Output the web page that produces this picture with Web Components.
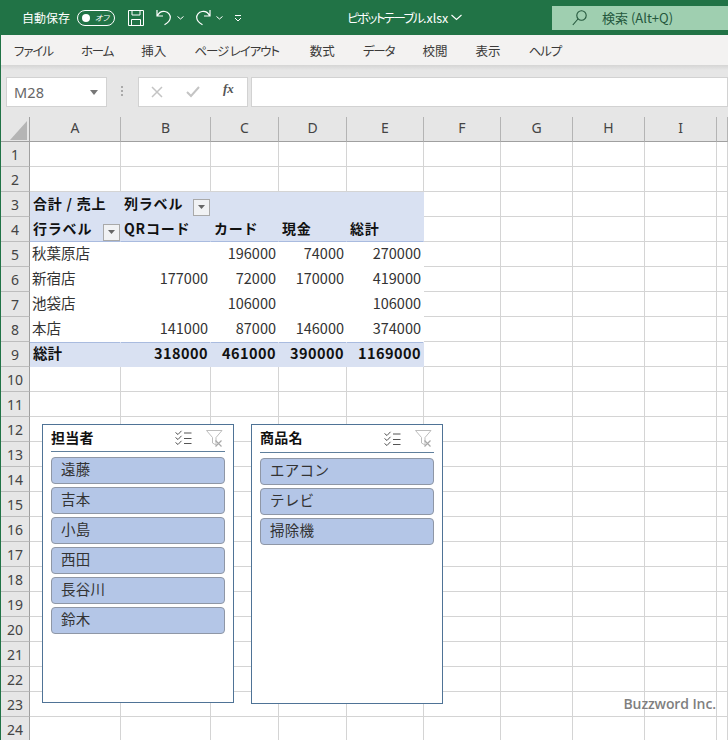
<!DOCTYPE html>
<html lang="ja">
<head>
<meta charset="utf-8">
<title>ピボットテーブル.xlsx</title>
<style>
html,body{margin:0;padding:0;background:#fff;}
body{width:728px;height:740px;overflow:hidden;font-family:"Noto Sans CJK JP","Noto Sans",sans-serif;}
</style>
</head>
<body>
<x-titlebar></x-titlebar>
<x-tabs></x-tabs>
<x-formula-bar></x-formula-bar>
<x-sheet>
  <x-slicer title-text="担当者" style="--l:41px;--t:307px;--h:279px">
    <x-slicer-item>遠藤</x-slicer-item>
    <x-slicer-item>吉本</x-slicer-item>
    <x-slicer-item>小島</x-slicer-item>
    <x-slicer-item>西田</x-slicer-item>
    <x-slicer-item>長谷川</x-slicer-item>
    <x-slicer-item>鈴木</x-slicer-item>
  </x-slicer>
  <x-slicer title-text="商品名" style="--l:250px;--t:307px;--h:280px;--shift:1px">
    <x-slicer-item>エアコン</x-slicer-item>
    <x-slicer-item>テレビ</x-slicer-item>
    <x-slicer-item>掃除機</x-slicer-item>
  </x-slicer>
</x-sheet>
<script>
const FONT='"Noto Sans CJK JP","Noto Sans",sans-serif';
function shadow(el,html){el.attachShadow({mode:'open'}).innerHTML=html;}

customElements.define('x-titlebar',class extends HTMLElement{
  connectedCallback(){ if(this.shadowRoot)return; shadow(this,`<style>
    :host{display:flex;align-items:center;height:35px;background:#217346;color:#fff;font:12px ${FONT};position:relative;box-sizing:border-box}
    .auto{margin-left:22px;width:55px;white-space:nowrap;letter-spacing:0}
    .toggle{width:38px;height:16px;box-sizing:border-box;border:1px solid #fff;border-radius:8px;display:flex;align-items:center;padding:0 4px;gap:5px;font-size:8px;line-height:1;font-style:italic;white-space:nowrap;overflow:hidden;font-feature-settings:"palt"}
    .toggle i{width:8px;height:8px;border-radius:50%;background:#fff;display:block;flex:none}
    svg{display:block;flex:none}
    .save{margin-left:13px}
    .undo{margin-left:12px}.c1{margin-left:5px}
    .redo{margin-left:11px}.c2{margin-left:5px}
    .qat{margin-left:11px}
    .name{margin-left:105px;width:104px;white-space:nowrap;font-size:12.5px;font-feature-settings:"palt"}
    .name b{font-weight:400;letter-spacing:-1.6px}
    .search{margin-left:auto;width:176px;height:24px;background:#9fcfb0;color:#24573c;display:flex;align-items:center;font-size:13px;box-sizing:border-box;padding-left:20px}
    .search span{margin-left:15px;white-space:nowrap}
  </style>
  <span class="auto">自動保存</span>
  <span class="toggle"><i></i><span>オフ</span></span>
  <svg class="save" width="16" height="16" viewBox="0 0 16 16" fill="none" stroke="#fff"><path d="M.5.5h15v15H.5zM4 .5v4.5h8V.5M3.500 15.500V9.500h9v6"/></svg>
  <svg class="undo" width="16" height="17" viewBox="0 0 16 17" fill="none" stroke="#fff" stroke-width="1.200"><path d="M1 1v6h6M1.500 6.500C3 3.500 6 2 9 2.500c3.500.6 5.500 3.500 5.300 6.200-.2 2.600-2 4.800-5.800 7"/></svg>
  <svg class="c1" width="7" height="4" viewBox="0 0 7 4" fill="none" stroke="#fff"><path d="M.5.500l3 2.500 3-2.500"/></svg>
  <svg class="redo" width="16" height="17" viewBox="0 0 16 17" fill="none" stroke="#fff" stroke-width="1.200"><path d="M15 1v6H9M14.500 6.500C13 3.500 10 2 7 2.500 3.500 3.100 1.500 6 1.700 8.700c.2 2.600 2 4.800 5.800 7"/></svg>
  <svg class="c2" width="7" height="4" viewBox="0 0 7 4" fill="none" stroke="#fff"><path d="M.5.500l3 2.500 3-2.500"/></svg>
  <svg class="qat" width="8" height="8" viewBox="0 0 8 8" fill="none" stroke="#fff"><path d="M1 1.500h6M1 4l3 3 3-3"/></svg>
  <span class="name"><b>ピボットテーブル</b>.xlsx</span>
  <svg width="11" height="7" viewBox="0 0 11 7" fill="none" stroke="#fff" stroke-width="1.100"><path d="M.5 1l5 4.500 5-4.500"/></svg>
  <div class="search">
    <svg width="15" height="16" viewBox="0 0 15 16" fill="none" stroke="#24573c" stroke-width="1.100"><circle cx="9.500" cy="5.500" r="4.700"/><path d="M6 9L.8 15"/></svg>
    <span>検索 (Alt+Q)</span>
  </div>`);}
});

customElements.define('x-tabs',class extends HTMLElement{
  connectedCallback(){ if(this.shadowRoot)return; shadow(this,`<style>
    :host{display:flex;align-items:center;height:30px;box-sizing:border-box;background:#f3f2f1;color:#3b3a39;font:12.5px ${FONT};font-feature-settings:"palt";padding-left:13px;gap:28px;border-left:1px solid #217346;white-space:nowrap}
    .k{letter-spacing:-1.100px}
    .w{margin-left:3px}
  </style>
  <span class="k">ファイル</span><span class="k">ホーム</span><span>挿入</span><span class="k">ページ レイアウト</span><span class="w">数式</span><span class="k">データ</span><span>校閲</span><span>表示</span><span class="k">ヘルプ</span>`);}
});

customElements.define('x-formula-bar',class extends HTMLElement{
  connectedCallback(){ if(this.shadowRoot)return; shadow(this,`<style>
    :host{display:flex;align-items:flex-start;height:52px;box-sizing:border-box;background:#e6e6e6;border-left:1px solid #217346;padding:12px 0 0 5px;position:relative;font-family:${FONT}}
    :host::before{content:"";position:absolute;left:0;right:0;top:0;height:5px;background:linear-gradient(#d5d5d4,#e6e6e6)}
    .box{background:#fff;border:1px solid #d2d2d2;box-sizing:border-box;height:30px}
    .name{width:101px;display:flex;align-items:center;padding:0 7px;color:#666;font:14.5px "Noto Sans",sans-serif;letter-spacing:.2px}
    .name svg{margin-left:auto}
    .dots{width:31px;display:flex;justify-content:center;padding-top:9px}
    .fx{width:110px;display:flex;align-items:center;position:relative}
    .fx svg{position:absolute}
    .fx em{position:absolute;left:84px;top:3px;font:italic bold 13px "Liberation Serif",serif;color:#555}
    .in{flex:1;margin-left:3px}
  </style>
  <div class="box name"><span>M28</span><svg width="9" height="5" viewBox="0 0 9 5"><path d="M0 0h8L4 5z" fill="#777"/></svg></div>
  <div class="dots"><svg width="3" height="11" viewBox="0 0 3 11" fill="#aaa"><rect y="0" width="2" height="2"/><rect y="4" width="2" height="2"/><rect y="8" width="2" height="2"/></svg></div>
  <div class="box fx">
    <svg style="left:12px;top:8px" width="12" height="12" viewBox="0 0 12 12" fill="none" stroke="#c4c4c4" stroke-width="1.500"><path d="M1 1l10 10M11 1L1 11"/></svg>
    <svg style="left:47px;top:8px" width="14" height="12" viewBox="0 0 14 12" fill="none" stroke="#c4c4c4" stroke-width="2"><path d="M1 6l4 4 8-9"/></svg>
    <em>fx</em>
  </div>
  <div class="box in"></div>`);}
});

customElements.define('x-sheet',class extends HTMLElement{
  connectedCallback(){ if(this.shadowRoot)return;
    const cols=['A','B','C','D','E','F','G','H','I',''];
    const widths=[91,90,68,68,77,77,72,72,72,11];
    const fb='<span class="fb"><svg width="7" height="4" viewBox="0 0 7 4"><path d="M0 0h7L3.500 4z" fill="#666"/></svg></span>';
    const data={
      3:[['合計 / 売上','h'],['<span class="l">列ラベル</span>'+fb,'h f'],['','h'],['','h'],['','h']],
      4:[['<span class="l">行ラベル</span>'+fb,'h f b'],['QRコード','h b'],['カード','h b'],['現金','h b'],['総計','h b']],
      5:[['秋葉原店','p'],['','p n'],['196000','p n'],['74000','p n'],['270000','p n e']],
      6:[['新宿店','p'],['177000','p n'],['72000','p n'],['170000','p n'],['419000','p n e']],
      7:[['池袋店','p'],['','p n'],['106000','p n'],['','p n'],['106000','p n e']],
      8:[['本店','p'],['141000','p n'],['87000','p n'],['146000','p n'],['374000','p n e']],
      9:[['総計','t'],['318000','t n'],['461000','t n'],['390000','t n'],['1169000','t n e']]
    };
    let html='<div class="corner"><svg width="17" height="19" viewBox="0 0 17 19"><path d="M17 0V19H0z" fill="#b5b5b5"/></svg></div>';
    cols.forEach(c=>html+=`<div class="ch">${c}</div>`);
    for(let r=1;r<=24;r++){
      html+=`<div class="rh">${r}</div>`;
      for(let c=0;c<10;c++){
        const d=data[r]&&data[r][c];
        html+=d?`<div class="c ${d[1]}"><span class="tx">${d[0]}</span></div>`:'<div class="c"></div>';
      }
    }
    shadow(this,`<style>
      :host{display:block;position:relative;height:623px;overflow:hidden;background:#fff;border-left:1px solid #217346;font-family:${FONT}}
      .g{display:grid;grid-template-columns:29px ${widths.map(w=>w+'px').join(' ')};grid-template-rows:25px repeat(24,25px)}
      .corner{background:#e6e6e6;border-right:1px solid #a0a0a0;border-bottom:1px solid #a0a0a0;box-sizing:border-box;display:flex;align-items:flex-end;justify-content:flex-end;padding:0 2px 1px 0}
      .corner svg{display:block}
      .ch{background:#e6e6e6;border-right:1px solid #b4b4b4;border-bottom:1px solid #a0a0a0;box-sizing:border-box;display:flex;align-items:center;justify-content:center;color:#444;font:14px "Noto Sans",sans-serif;padding-bottom:3px}
      .rh{background:#e6e6e6;border-right:1px solid #a0a0a0;border-bottom:1px solid #bdbdbd;box-sizing:border-box;display:flex;align-items:center;justify-content:center;color:#444;font:14px "Noto Sans",sans-serif}
      .c{border-right:1px solid #d4d4d4;border-bottom:1px solid #d4d4d4;box-sizing:border-box;display:flex;align-items:center;padding:0 2px;font-size:14.500px;color:#333;white-space:nowrap;min-width:0}
      .p,.t{padding-bottom:4px}
      .h:not(.f){padding-bottom:2px}
      .tx{display:flex;align-items:center;width:100%}
      .l{padding-bottom:2px}
      .h,.t{background:#d9e1f2;border-color:#d9e1f2;font-weight:700;color:#111;padding-left:3px;padding-right:3px}
      .h{font-size:14px;letter-spacing:.8px}
      .h.b{border-bottom-color:#a9bbdf}
      .p{background:#fff;border-color:#fff}
      .t{box-shadow:inset 0 1px 0 #a9bbdf;font-size:14.500px}
      .n{justify-content:flex-end}
      .n .tx{width:auto}
      .t.n{letter-spacing:.45px}
      .t.n,.p.n{padding-right:2px}
      .e{padding-right:1px}
      .h.f{padding-right:0}
      .fb{margin-left:auto;margin-top:6px;width:17px;height:17px;box-sizing:border-box;background:#f1f2f4;border:1px solid #a9a9a9;display:flex;align-items:center;justify-content:center;flex:none;letter-spacing:0}
      .fb svg{display:block}
      .wm{position:absolute;right:12px;top:577px;font:600 14px "Open Sans","Noto Sans",sans-serif;color:#7f7f7f;letter-spacing:-.1px}
    </style>
    <div class="g">${html}</div>
    <slot></slot>
    <div class="wm">Buzzword Inc.</div>`);
  }
});

customElements.define('x-slicer',class extends HTMLElement{
  connectedCallback(){ if(this.shadowRoot)return;
    const t=this.getAttribute('title-text')||'';
    shadow(this,`<style>
      :host{display:flex;flex-direction:column;position:absolute;left:var(--l);top:var(--t);width:192px;height:var(--h);box-sizing:border-box;background:#fff;border:1px solid #4f7396;padding:0 8px;font-family:${FONT}}
      header{display:flex;align-items:center;height:calc(27px + var(--shift,0px));box-sizing:border-box;border-bottom:1px solid #5f7f9c;font-weight:700;font-size:14px;color:#111;padding-right:2px}
      header span{flex:1;padding-bottom:3px;letter-spacing:.2px}
      svg{display:block;flex:none}
      .fl{margin-left:14px}
      .list{display:flex;flex-direction:column;gap:3px;padding-top:5px}
    </style>
    <header><span>${t}</span>
      <svg width="17" height="16" viewBox="0 0 17 16" fill="none" stroke="#555" stroke-width="1"><path d="M.5 2.500l2.500 2L6.500.8M.5 7.500l2.500 2 3.500-3.700M.5 12.500l2.500 2 3.500-3.700M9 3h7.500M9 8.500h7.500M9 13.500h7.500"/></svg>
      <svg class="fl" width="17" height="17" viewBox="0 0 17 17" fill="none"><path d="M.5.500h15.500l-6 7v7.500l-3.500-2V7.500z" stroke="#bdbdbd" fill="#fff"/><path d="M9.500 10.500l6 6M15.500 10.500l-6 6" stroke="#a8a8a8" stroke-width="1.200"/></svg>
    </header>
    <div class="list"><slot></slot></div>`);
  }
});

customElements.define('x-slicer-item',class extends HTMLElement{
  connectedCallback(){ if(this.shadowRoot)return;
    shadow(this,`<style>
      :host{display:flex;align-items:center;height:27px;box-sizing:border-box;background:#b4c6e7;border:1px solid #8f97a6;border-radius:4px;padding:0 0 4px 9px;font-size:14.500px;color:#333;letter-spacing:.3px}
    </style><slot></slot>`);
  }
});
</script>
</body>
</html>
